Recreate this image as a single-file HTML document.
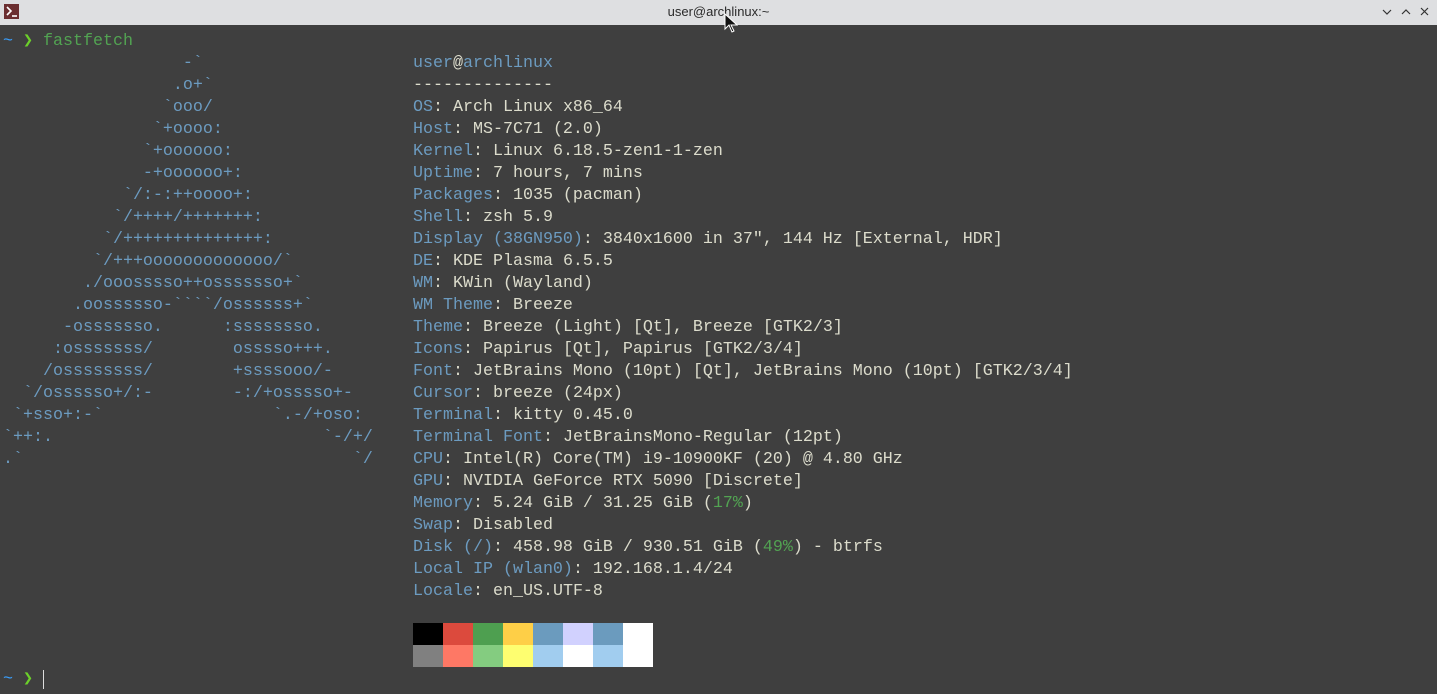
<!DOCTYPE html>
<html><head><meta charset="utf-8"><style>
html,body{margin:0;padding:0;width:1437px;height:694px;overflow:hidden;background:#3f3f3f}
.tb{position:absolute;left:0;top:0;width:1437px;height:25px;background:#dedfe1;}
.tt{position:absolute;left:0;width:1437px;top:4px;text-align:center;font:13px "Liberation Sans",sans-serif;color:#2a2a2a}
.ic{position:absolute;left:4px;top:4px;width:15px;height:15px;background:#6b2e30}
pre{position:absolute;margin:0;font-family:"Liberation Mono","DejaVu Sans Mono",monospace;font-size:16.67px;line-height:22px;color:#dcdccc;white-space:pre}
.b{color:#6c9bc0}.g{color:#52a352}
.pal{position:absolute;left:413px;top:623px;display:grid;grid-template-columns:repeat(8,30px);grid-auto-rows:22px}
</style></head><body>
<div class="tb"><div class="ic"><svg width="15" height="15"><path d="M3 3l4 4-4 4" stroke="#fff" stroke-width="1.6" fill="none"/><path d="M8 12h5" stroke="#fff" stroke-width="1.6"/></svg></div>
<div class="tt">user@archlinux:~</div>
<svg style="position:absolute;left:1382px;top:7px" width="50" height="10"><path d="M1 3l4 4 4-4M20 7l4-4 4 4M39 1l7 7M46 1l-7 7" stroke="#333" stroke-width="1.2" fill="none"/></svg>
<svg style="position:absolute;left:724px;top:13px" width="14" height="22"><path d="M1 1v15l4-4 3 7 2-1-3-6h6z" fill="#111" stroke="#fff" stroke-width="1"/></svg>
</div>
<pre style="left:3px;top:31px"><span style="color:#3aa0ff">~</span> <span style="color:#6cd02a">❯</span> <span class="g">fastfetch</span><span class="b">
                  -&#96;
                 .o+&#96;
                &#96;ooo/
               &#96;+oooo:
              &#96;+oooooo:
              -+oooooo+:
            &#96;/:-:++oooo+:
           &#96;/++++/+++++++:
          &#96;/++++++++++++++:
         &#96;/+++ooooooooooooo/&#96;
        ./ooosssso++osssssso+&#96;
       .oossssso-&#96;&#96;&#96;&#96;/ossssss+&#96;
      -osssssso.      :ssssssso.
     :osssssss/        osssso+++.
    /ossssssss/        +ssssooo/-
  &#96;/ossssso+/:-        -:/+osssso+-
 &#96;+sso+:-&#96;                 &#96;.-/+oso:
&#96;++:.                           &#96;-/+/
.&#96;                                 &#96;/</span>









<span style="color:#3aa0ff">~</span> <span style="color:#6cd02a">❯</span> <span style="border-left:1.5px solid #ddd"> </span></pre>
<pre style="left:413px;top:53px"><span class="b">user</span>@<span class="b">archlinux</span>
--------------
<span class="b">OS</span>: Arch Linux x86_64
<span class="b">Host</span>: MS-7C71 (2.0)
<span class="b">Kernel</span>: Linux 6.18.5-zen1-1-zen
<span class="b">Uptime</span>: 7 hours, 7 mins
<span class="b">Packages</span>: 1035 (pacman)
<span class="b">Shell</span>: zsh 5.9
<span class="b">Display (38GN950)</span>: 3840x1600 in 37", 144 Hz [External, HDR]
<span class="b">DE</span>: KDE Plasma 6.5.5
<span class="b">WM</span>: KWin (Wayland)
<span class="b">WM Theme</span>: Breeze
<span class="b">Theme</span>: Breeze (Light) [Qt], Breeze [GTK2/3]
<span class="b">Icons</span>: Papirus [Qt], Papirus [GTK2/3/4]
<span class="b">Font</span>: JetBrains Mono (10pt) [Qt], JetBrains Mono (10pt) [GTK2/3/4]
<span class="b">Cursor</span>: breeze (24px)
<span class="b">Terminal</span>: kitty 0.45.0
<span class="b">Terminal Font</span>: JetBrainsMono-Regular (12pt)
<span class="b">CPU</span>: Intel(R) Core(TM) i9-10900KF (20) @ 4.80 GHz
<span class="b">GPU</span>: NVIDIA GeForce RTX 5090 [Discrete]
<span class="b">Memory</span>: 5.24 GiB / 31.25 GiB (<span class="g">17%</span>)
<span class="b">Swap</span>: Disabled
<span class="b">Disk (/)</span>: 458.98 GiB / 930.51 GiB (<span class="g">49%</span>) - btrfs
<span class="b">Local IP (wlan0)</span>: 192.168.1.4/24
<span class="b">Locale</span>: en_US.UTF-8</pre>
<div class="pal">
<div style="background:#000"></div><div style="background:#dc4a3d"></div><div style="background:#4e9f50"></div><div style="background:#fecf47"></div><div style="background:#6b9bbe"></div><div style="background:#d1d1fe"></div><div style="background:#6b9bbe"></div><div style="background:#fff"></div>
<div style="background:#808080"></div><div style="background:#fe7865"></div><div style="background:#84cc80"></div><div style="background:#fefe70"></div><div style="background:#a1cdef"></div><div style="background:#fff"></div><div style="background:#a1cdef"></div><div style="background:#fff"></div>
</div>
</body></html>
